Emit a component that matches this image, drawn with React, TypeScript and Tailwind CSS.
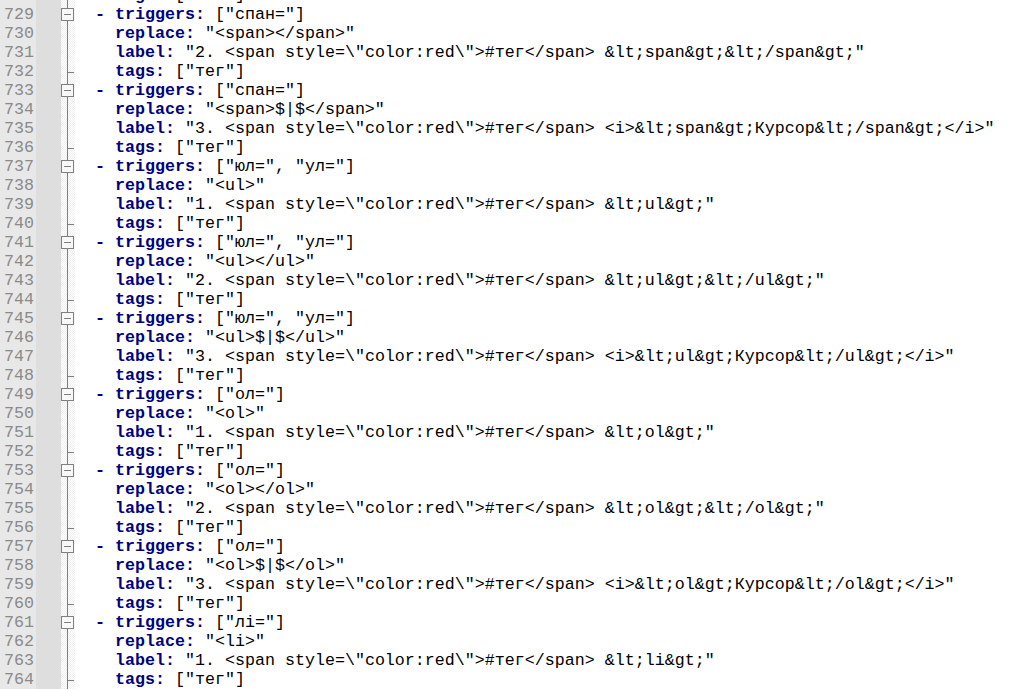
const first = 728;

const label = (n: string, tail: string) =>
  `"${n}. <span style=\\"color:red\\">#тег</span> ${tail}"`;

type Block = { triggers: string; replace: string; label: string };

const blocks: Block[] = [
  { triggers: '["спан="]', replace: '"<span></span>"', label: label("2", "&lt;span&gt;&lt;/span&gt;") },
  { triggers: '["спан="]', replace: '"<span>$|$</span>"', label: label("3", "<i>&lt;span&gt;Курсор&lt;/span&gt;</i>") },
  { triggers: '["юл=", "ул="]', replace: '"<ul>"', label: label("1", "&lt;ul&gt;") },
  { triggers: '["юл=", "ул="]', replace: '"<ul></ul>"', label: label("2", "&lt;ul&gt;&lt;/ul&gt;") },
  { triggers: '["юл=", "ул="]', replace: '"<ul>$|$</ul>"', label: label("3", "<i>&lt;ul&gt;Курсор&lt;/ul&gt;</i>") },
  { triggers: '["ол="]', replace: '"<ol>"', label: label("1", "&lt;ol&gt;") },
  { triggers: '["ол="]', replace: '"<ol></ol>"', label: label("2", "&lt;ol&gt;&lt;/ol&gt;") },
  { triggers: '["ол="]', replace: '"<ol>$|$</ol>"', label: label("3", "<i>&lt;ol&gt;Курсор&lt;/ol&gt;</i>") },
  { triggers: '["лі="]', replace: '"<li>"', label: label("1", "&lt;li&gt;") },
];

type Line = { indent: string; key: string; value: string; fold: "box" | "line" | "end" };

// first visible row is the tail of the previous block
const lines: Line[] = [{ indent: "    ", key: "tags:", value: ' ["тег"]', fold: "end" }];
blocks.forEach((b) => {
  lines.push({ indent: "  ", key: "- triggers:", value: " " + b.triggers, fold: "box" });
  lines.push({ indent: "    ", key: "replace:", value: " " + b.replace, fold: "line" });
  lines.push({ indent: "    ", key: "label:", value: " " + b.label, fold: "line" });
  lines.push({ indent: "    ", key: "tags:", value: ' ["тег"]', fold: "end" });
});

function FoldMark({ kind }: { kind: Line["fold"] }) {
  return (
    <svg width="14" height="19" viewBox="0 0 14 19" className="block">
      <line x1="6.5" y1="0" x2="6.5" y2="19" stroke="#808080" strokeWidth="1" />
      {kind === "end" && <line x1="6.5" y1="10.5" x2="13" y2="10.5" stroke="#808080" strokeWidth="1" />}
      {kind === "box" && (
        <>
          <rect x="0.5" y="3.5" width="12" height="12" fill="#f8f8f8" stroke="#808080" strokeWidth="1" />
          <line x1="3" y1="9.5" x2="10" y2="9.5" stroke="#808080" strokeWidth="1" />
        </>
      )}
    </svg>
  );
}

export default function App() {
  return (
    <div className="w-[1011px] h-[690px] overflow-hidden bg-white font-['Liberation_Mono','Courier_New',monospace] text-[16.66px] leading-[19px]">
      <div className="-mt-[14px]">
        {lines.map((l, i) => (
          <div key={i} className="flex h-[19px]">
            <div className="w-[36px] shrink-0 bg-[#e8e8e8] text-right pr-[2px] text-[#8a8a8a]">{first + i}</div>
            <div className="w-[25px] shrink-0 bg-[#dedede]" />
            <div className="w-[14px] shrink-0 bg-[repeating-conic-gradient(#f0f0f0_0_25%,#ffffff_0_50%)] [background-size:2px_2px]">
              <FoldMark kind={l.fold} />
            </div>
            <div className="whitespace-pre text-black">
              {l.indent}
              <span className="font-bold text-[#000080]">{l.key}</span>
              {l.value}
            </div>
          </div>
        ))}
      </div>
    </div>
  );
}
